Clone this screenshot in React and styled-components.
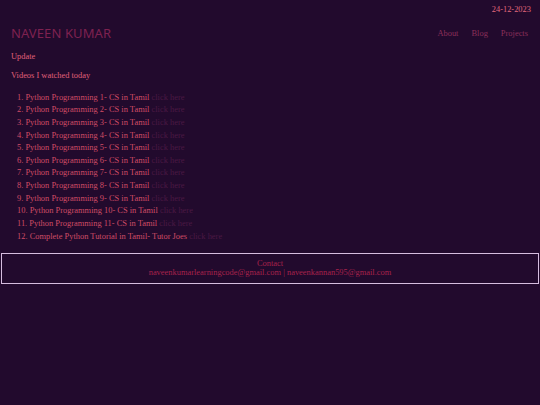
import React from "react";
import styled, { createGlobalStyle } from "styled-components";

const videos = [
  "Python Programming 1- CS in Tamil",
  "Python Programming 2- CS in Tamil",
  "Python Programming 3- CS in Tamil",
  "Python Programming 4- CS in Tamil",
  "Python Programming 5- CS in Tamil",
  "Python Programming 6- CS in Tamil",
  "Python Programming 7- CS in Tamil",
  "Python Programming 8- CS in Tamil",
  "Python Programming 9- CS in Tamil",
  "Python Programming 10- CS in Tamil",
  "Python Programming 11- CS in Tamil",
  "Complete Python Tutorial in Tamil- Tutor Joes",
];

function App() {
  return (
    <Page>
      <GlobalStyle />
      <DateBar>24-12-2023</DateBar>
      <Header>
        <Title>NAVEEN KUMAR</Title>
        <Nav>
          <NavLink href="#">About</NavLink>
          <NavLink href="#">Blog</NavLink>
          <NavLink href="#">Projects</NavLink>
        </Nav>
      </Header>
      <Main>
        <Update>Update</Update>
        <Heading>Videos I watched today</Heading>
        <List>
          {videos.map((v) => (
            <Item key={v}>
              {v} <Click href="#">click here</Click>
            </Item>
          ))}
        </List>
      </Main>
      <Footer>
        <FootTitle>Contact</FootTitle>
        <FootLine>naveenkumarlearningcode@gmail.com | naveenkannan595@gmail.com</FootLine>
      </Footer>
    </Page>
  );
}

export default App;

const GlobalStyle = createGlobalStyle`
html, body {
  margin: 0;
  padding: 0;
  background: #220a2d;
}
body {
  font-family: "Liberation Serif", "Times New Roman", serif;
  font-size: 8.44px;
}
`

const Page = styled.div`
min-height: 405px;
background: #220a2d;
color: #d4506a;
`

const DateBar = styled.div`
height: 17px;
line-height: 18px;
text-align: right;
padding-right: 9px;
color: #e0687c;
`

const Header = styled.header`
height: 32px;
display: flex;
align-items: center;
justify-content: space-between;
padding: 0 12px 0 11px;
`

const Title = styled.h1`
margin: 0;
font-family: "Noto Sans", "Open Sans", sans-serif;
font-weight: 400;
font-size: 13px;
color: #7e2150;
letter-spacing: 0.1px;
`

const Nav = styled.nav`
display: flex;
gap: 13px;
`

const NavLink = styled.a`
color: #8a2f5a;
text-decoration: none;
`

const Main = styled.main`
padding-left: 11px;
`

const Update = styled.p`
margin: 0;
line-height: 14px;
color: #e0607a;
`

const Heading = styled.p`
margin: 5px 0 0;
line-height: 14px;
color: #e0607a;
`

const List = styled.ol`
margin: 8.7px 0 0;
padding-left: 6px;
list-style-position: inside;
`

const Item = styled.li`
line-height: 12.63px;
color: #d04c66;
`

const Click = styled.a`
color: #4b1944;
text-decoration: none;
`

const Footer = styled.footer`
margin: 10.5px 1px 0;
border: 1.5px solid #d6bddf;
padding: 5px 0 5.5px;
text-align: center;
color: #a8224c;
`

const FootTitle = styled.div`
line-height: 9.5px;
`

const FootLine = styled.div`
line-height: 9.5px;
`
